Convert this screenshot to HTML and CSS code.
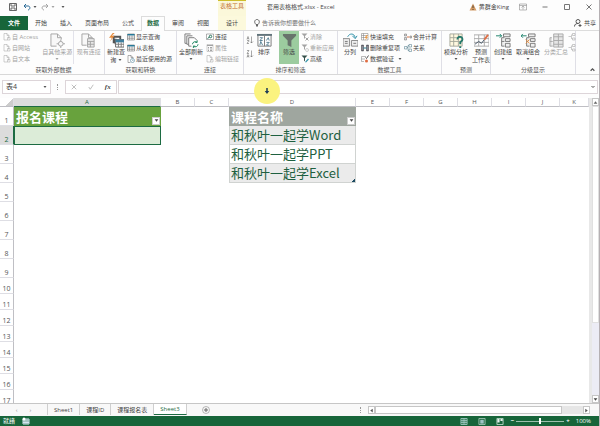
FILE: index.html
```html
<!DOCTYPE html>
<html>
<head>
<meta charset="utf-8">
<title>套用表格格式.xlsx - Excel</title>
<link rel="stylesheet" href="styles.css">
</head>
<body>
<svg class="defs" aria-hidden="true">
  <symbol id="doc" viewBox="0 0 16 16"><path d="M9 14H2V1h6l4 4v3M8 1v4h4" fill="none" stroke="currentColor"/><path d="M9 9h5v5H9zM11 7v4" fill="none" stroke="currentColor"/></symbol>
  <symbol id="docgear" viewBox="0 0 16 16"><path d="M7 14H1V1h7l4 4v2M8 1v4h4" fill="#f8f8f8" stroke="currentColor"/><circle cx="11.500" cy="11.500" r="2.500" fill="#f8f8f8" stroke="currentColor"/><path d="M11.500 7v2M11.500 14v2M7 11.500h2M14 11.500h2" stroke="currentColor"/></symbol>
  <symbol id="doctable" viewBox="0 0 16 16"><path d="M6 13H1V1h7l4 4v2M8 1v4h4" fill="#f8f8f8" stroke="currentColor"/><path d="M7 6h7v9H7zM7 9h7M7 12h7M10 9v6" fill="#e8e8e8" stroke="currentColor"/></symbol>
  <symbol id="newquery" viewBox="0 0 16 16"><path d="M5 11V4h7v3M7 12V6" fill="none" stroke="#555" stroke-width="2"/><path d="M4 0 0 5h3L1 9l5-6H3l3-3z" fill="#e58a3c"/><path d="M7 7h9v8H7z" fill="#fff" stroke="#666"/><path d="M7 7h9v3H7z" fill="#3e7f9f"/><path d="M7 12h9M10 10v5M13 10v5" stroke="#777"/></symbol>
  <symbol id="table" viewBox="0 0 16 16"><path d="M1 2h14v12H1z" fill="#fff" stroke="#555"/><path d="M1 2h14v3H1z" fill="#267999"/><path d="M1 8h14M1 11h14M5 5v9M10 5v9" stroke="#777"/></symbol>
  <symbol id="recent" viewBox="0 0 16 16"><path d="M7 15H2V1h6l4 4v2M8 1v4h4" fill="none" stroke="#666"/><circle cx="11" cy="11" r="4" fill="#fff" stroke="#35718d"/><path d="M11 9v2h2" fill="none" stroke="#35718d"/></symbol>
  <symbol id="refresh" viewBox="0 0 16 16"><path d="M3 11H1V1h6M5 12H3V3h6M8 14H5V5h6l3 3" fill="none" stroke="#777"/><circle cx="12" cy="12" r="4" fill="#fff"/><path d="M9 12a3 3 0 0 1 5-2M15 12a3 3 0 0 1-5 2M14 8v2h-2M10 16v-2h2" fill="none" stroke="#16815c"/></symbol>
  <symbol id="link" viewBox="0 0 16 16"><path d="M1 2h14v11H1z" fill="#fff" stroke="#666"/><circle cx="9" cy="7" r="2.500" fill="none" stroke="#26735a" stroke-width="2"/><path d="m3 11 4-3" stroke="#26735a" stroke-width="2"/></symbol>
  <symbol id="props" viewBox="0 0 16 16"><path d="M2 1h12v14H2z" fill="none" stroke="currentColor"/><path d="M2 3h12M4 7h2M8 7h4M4 10h2M8 10h4M4 13h2M8 13h4" stroke="currentColor" stroke-width="2"/></symbol>
  <symbol id="az" viewBox="0 0 16 16"><path d="m2 7 2-6 2 6M3 5h2M2 9h4l-4 6h4M11 1v13M8 11l3 3 3-3" fill="none" stroke="#555"/></symbol>
  <symbol id="za" viewBox="0 0 16 16"><path d="M2 1h4L2 7h4M2 15l2-6 2 6M3 13h2M11 1v13M8 11l3 3 3-3" fill="none" stroke="#555"/></symbol>
  <symbol id="sort" viewBox="0 0 16 16"><path d="M1 2h14v12H1z" fill="#fff" stroke="#777"/><path d="M0 1h16v2H0z" fill="#62747c"/><path d="M8 3v11" stroke="#777"/><path d="M3 5h3L3 8h3M3 13l1-4 2 4M10 8l2-3 1 3M10 10h3l-3 3h3" fill="none" stroke="#557f92"/></symbol>
  <symbol id="funnel" viewBox="0 0 16 16"><path d="M1 1h14v2L10 8v7l-4-2V8L1 3z" fill="#68736c"/></symbol>
  <symbol id="clear" viewBox="0 0 16 16"><path d="M1 1h12L8 6v6l-2-2V6z" fill="currentColor"/><path d="m9 9 6 6M15 9l-6 6" stroke="currentColor" stroke-width="2"/></symbol>
  <symbol id="reapply" viewBox="0 0 16 16"><path d="M1 1h12L8 6v6l-2-2V6z" fill="currentColor"/><circle cx="12" cy="12" r="3" fill="none" stroke="currentColor"/></symbol>
  <symbol id="advanced" viewBox="0 0 16 16"><path d="M1 1h12L8 6v7l-2-2V6z" fill="#35504a"/><path d="m8 14 6-7 2 2-6 6z" fill="#3293a8"/></symbol>
  <symbol id="split" viewBox="0 0 16 16"><path d="M0 6h7v8H0zM9 8h7v6H9z" fill="#eee" stroke="#888"/><path d="M2 9h3M2 11h3M11 11h3" stroke="#777"/><path d="M5 4c2-4 7-4 8 1M10 3l3 3 2-3" fill="none" stroke="#248ba3"/></symbol>
  <symbol id="flash" viewBox="0 0 16 16"><path d="M1 1h13v13H1zM1 5h13M5 1v13M1 9h7" fill="#fff" stroke="#777"/><path d="m11 4-4 6h3l-2 5 6-7h-3l3-4z" fill="#e89d4c"/></symbol>
  <symbol id="dup" viewBox="0 0 16 16"><path d="M1 2h4v12H1zM11 2h4v12h-4z" fill="#667" stroke="#444"/><path d="M2 6h2M2 10h2M12 6h2M12 10h2" stroke="#fff"/><path d="M5 8h6" stroke="#287d91" stroke-width="2"/></symbol>
  <symbol id="valid" viewBox="0 0 16 16"><path d="M1 3h9M1 8h7M1 13h5M1 3v10" stroke="#777" fill="none"/><circle cx="11" cy="12" r="3" fill="#e06c42"/><path d="m9 5 2 2 4-6" fill="none" stroke="#555" stroke-width="2"/></symbol>
  <symbol id="merge" viewBox="0 0 16 16"><path d="M1 2h4v4H1zM1 9h4v5H1zM12 6h3v4h-3z" fill="#ddd" stroke="#666"/><path d="M6 8h5" stroke="#d7774b" stroke-width="2"/></symbol>
  <symbol id="relation" viewBox="0 0 16 16"><path d="M1 5h5v5H1zM10 1h5v5h-5zM10 10h5v5h-5zM6 7h2V3h2M8 7v6h2" fill="none" stroke="#427183"/></symbol>
  <symbol id="whatif" viewBox="0 0 16 16"><path d="M1 1h13v13H1zM1 5h13M1 9h13M5 1v13M10 1v13" fill="#fff8df" stroke="#a5a79b"/><path d="M9 7c0-5 7-3 5 1l-2 2v2M12 14v2" fill="none" stroke="#26796b" stroke-width="2"/></symbol>
  <symbol id="forecast" viewBox="0 0 16 16"><path d="M0 2h16v12H0zM0 6h16M0 10h16M5 2v12M11 2v12" fill="#fff" stroke="#aaa"/><path d="m1 12 4-3 3 2 3-4" fill="none" stroke="#456"/><path d="m11 7 4-5" stroke="#df7047" stroke-width="2"/></symbol>
  <symbol id="group" viewBox="0 0 16 16"><path d="M8 1h7v3H8zM10 6h5v3h-5zM10 11h5v4h-5zM9 5H6v9h3M6 9h3" fill="#eee" stroke="#777"/><path d="M0 3h6M4 1l2 2-2 2" fill="none" stroke="#198069"/></symbol>
  <symbol id="ungroup" viewBox="0 0 16 16"><path d="M8 1h7v3H8zM10 6h5v3h-5zM10 11h5v4h-5zM9 5H6v9h3" fill="#eee" stroke="#777"/><path d="M0 3h6M2 1 0 3l2 2" fill="none" stroke="#198069"/><path d="m5 7 4 4M9 7l-4 4" stroke="#e68a3a"/></symbol>
  <symbol id="subtotal" viewBox="0 0 16 16"><path d="M5 1h10v14H5zM5 4h10M5 8h10M5 12h10M10 1v14M3 5H1v9h3M1 9h3" fill="#e5e5e5" stroke="#aaa"/></symbol>
  <symbol id="detail" viewBox="0 0 16 16"><path d="M9 1h5v4H9zM9 10h5v4H9zM7 3v9M1 7h5" fill="none" stroke="#999"/></symbol>
  <symbol id="down" viewBox="0 0 8 8"><path d="M1 2h6L4 6z" fill="currentColor"/></symbol>
  <symbol id="chev" viewBox="0 0 8 8"><path d="m1 2 3 3 3-3" fill="none" stroke="currentColor" stroke-width="2"/></symbol>
</svg>

<header class="titlebar">
  <div class="qat">
    <button aria-label="保存"><svg viewBox="0 0 16 16"><path d="M1 1h14v14H1zM4 1v5h8V1M4 15v-5h8v5" fill="none" stroke="#666" stroke-width="2"/></svg></button>
    <button aria-label="撤消"><svg viewBox="0 0 16 16"><path d="M3 6h7c5 0 5 7 0 8M6 2 2 6l4 4" fill="none" stroke="#2b6a96" stroke-width="2"/></svg></button>
    <svg class="caret"><use href="#down"/></svg>
    <button aria-label="恢复" class="off"><svg viewBox="0 0 16 16"><path d="M13 6H6c-5 0-5 7 0 8M10 2l4 4-4 4" fill="none" stroke="currentColor" stroke-width="2"/></svg></button>
    <svg class="caret off"><use href="#down"/></svg>
    <svg class="caret last"><use href="#down"/></svg>
  </div>
  <div class="context">表格工具</div>
  <h1>套用表格格式.xlsx - Excel</h1>
  <div class="account"><svg viewBox="0 0 16 16"><path d="M8 1 15 15H1z" fill="#d29a64"/><path d="M8 5v5M8 12v2" stroke="#543" stroke-width="2"/></svg>黄群金King</div>
  <div class="window">
    <button aria-label="功能区显示选项"><svg viewBox="0 0 16 16"><path d="M1 2h14v12H1zM1 5h14M8 13V7M5 9l3-3 3 3" fill="none" stroke="#777"/></svg></button>
    <button aria-label="最小化"><svg viewBox="0 0 16 16"><path d="M3 8h10" stroke="#777" stroke-width="2"/></svg></button>
    <button aria-label="最大化"><svg viewBox="0 0 16 16"><path d="M3 3h10v10H3z" fill="none" stroke="#777" stroke-width="2"/></svg></button>
    <button aria-label="关闭"><svg viewBox="0 0 16 16"><path d="m3 3 10 10M13 3 3 13" stroke="#777" stroke-width="2"/></svg></button>
  </div>
</header>

<nav class="tabs">
  <button class="file">文件</button>
  <button>开始</button><button>插入</button><button>页面布局</button><button>公式</button><button class="active">数据</button><button>审阅</button><button>视图</button>
  <button class="design">设计</button>
  <button class="tell"><svg viewBox="0 0 16 16"><path d="M6 11C1 6 4 1 8 1s7 5 2 10zM6 13h4M7 15h2" fill="none" stroke="#666" stroke-width="2"/></svg>告诉我你想要做什么</button>
  <button class="share"><svg viewBox="0 0 16 16"><circle cx="8" cy="5" r="4" fill="none" stroke="#555" stroke-width="2"/><path d="M1 15c0-5 4-6 7-6M9 13h6M12 10v6" fill="none" stroke="#555" stroke-width="2"/></svg>共享</button>
</nav>

<section class="ribbon">
  <div class="group g-external">
    <div class="tools">
      <div class="stack off">
        <button><svg><use href="#doc"/></svg>自 Access</button>
        <button><svg><use href="#doc"/></svg>自网站</button>
        <button><svg><use href="#doc"/></svg>自文本</button>
      </div>
      <button class="big off w5"><svg><use href="#docgear"/></svg>自其他来源<svg class="caret"><use href="#down"/></svg></button>
      <button class="big off w4 ruled"><svg><use href="#doctable"/></svg>现有连接</button>
    </div>
    <h2>获取外部数据</h2>
  </div>
  <div class="group g-transform">
    <div class="tools">
      <button class="big w3"><svg><use href="#newquery"/></svg>新建查<span>询 <svg class="caret"><use href="#down"/></svg></span></button>
      <div class="stack">
        <button><svg><use href="#table"/></svg>显示查询</button>
        <button><svg><use href="#table"/></svg>从表格</button>
        <button><svg><use href="#recent"/></svg>最近使用的源</button>
      </div>
    </div>
    <h2>获取和转换</h2>
  </div>
  <div class="group g-connect">
    <div class="tools">
      <button class="big w4"><svg><use href="#refresh"/></svg>全部刷新<svg class="caret"><use href="#down"/></svg></button>
      <div class="stack">
        <button><svg><use href="#link"/></svg>连接</button>
        <button class="off"><svg><use href="#props"/></svg>属性</button>
        <button class="off"><svg><use href="#doc"/></svg>编辑链接</button>
      </div>
    </div>
    <h2>连接</h2>
  </div>
  <div class="group g-sort">
    <div class="tools">
      <div class="pair"><button aria-label="升序"><svg><use href="#az"/></svg></button><button aria-label="降序"><svg><use href="#za"/></svg></button></div>
      <button class="big w2"><svg><use href="#sort"/></svg>排序</button>
      <button class="big w2 on"><svg><use href="#funnel"/></svg>筛选</button>
      <div class="stack">
        <button class="off"><svg><use href="#clear"/></svg>清除</button>
        <button class="off"><svg><use href="#reapply"/></svg>重新应用</button>
        <button><svg><use href="#advanced"/></svg>高级</button>
      </div>
    </div>
    <h2>排序和筛选</h2>
  </div>
  <div class="group g-data">
    <div class="tools">
      <button class="big w2"><svg><use href="#split"/></svg>分列</button>
      <div class="stack">
        <button><svg><use href="#flash"/></svg>快速填充</button>
        <button><svg><use href="#dup"/></svg>删除重复项</button>
        <button><svg><use href="#valid"/></svg>数据验证 <svg class="caret"><use href="#down"/></svg></button>
      </div>
      <div class="stack">
        <button><svg><use href="#merge"/></svg>合并计算</button>
        <button><svg><use href="#relation"/></svg>关系</button>
      </div>
    </div>
    <h2>数据工具</h2>
  </div>
  <div class="group g-forecast">
    <div class="tools">
      <button class="big w4"><svg><use href="#whatif"/></svg>模拟分析<svg class="caret"><use href="#down"/></svg></button>
      <button class="big w3"><svg><use href="#forecast"/></svg>预测<span>工作表</span></button>
    </div>
    <h2>预测</h2>
  </div>
  <div class="group g-outline">
    <div class="tools">
      <button class="big w3"><svg><use href="#group"/></svg>创建组<svg class="caret"><use href="#down"/></svg></button>
      <button class="big w4"><svg><use href="#ungroup"/></svg>取消组合<svg class="caret"><use href="#down"/></svg></button>
      <button class="big w4 off"><svg><use href="#subtotal"/></svg>分类汇总</button>
      <div class="stack off">
        <button aria-label="显示明细数据"><svg><use href="#detail"/></svg></button>
        <button aria-label="隐藏明细数据"><svg><use href="#detail"/></svg></button>
      </div>
    </div>
    <h2>分级显示</h2>
  </div>
  <button class="collapse" aria-label="折叠功能区"><svg viewBox="0 0 8 8"><path d="m1 6 3-3 3 3" fill="none" stroke="#555" stroke-width="2"/></svg></button>
</section>

<div class="formula">
  <div class="namebox"><input aria-label="名称框" value="表4"><svg class="caret"><use href="#down"/></svg></div>
  <span class="dots"></span>
  <div class="fx">
    <button aria-label="取消"><svg viewBox="0 0 8 8"><path d="m1 1 6 6M7 1 1 7" stroke="#aaa"/></svg></button>
    <button aria-label="输入"><svg viewBox="0 0 8 8"><path d="m1 4 2 3 4-6" fill="none" stroke="#aaa"/></svg></button>
    <button aria-label="插入函数"><i>fx</i></button>
  </div>
  <div class="entry"><input aria-label="编辑栏"><svg class="caret"><use href="#chev"/></svg></div>
  <div class="pointer"><svg viewBox="0 0 8 8"><path d="M3 0h2v4h2L4 8 1 4h2z" fill="#1d3b57"/></svg></div>
</div>

<main class="sheet">
  <div class="cells">
    <table>
      <colgroup><col class="c-num"><col class="c-a"><col class="c-s"><col class="c-s"><col class="c-d"><col class="c-s"><col class="c-s"><col class="c-s"><col class="c-s"><col class="c-s"><col class="c-s"><col></colgroup>
      <thead><tr><th class="corner"></th><th class="sel">A</th><th>B</th><th>C</th><th>D</th><th>E</th><th>F</th><th>G</th><th>H</th><th>I</th><th>J</th><th>K</th></tr></thead>
      <tbody>
        <tr><th>1</th><td class="h green"><div>报名课程<button aria-label="筛选报名课程"><svg><use href="#down"/></svg></button></div></td><td></td><td></td><td class="h grey"><div>课程名称<button aria-label="筛选课程名称"><svg><use href="#down"/></svg></button></div></td><td colspan="7"></td></tr>
        <tr><th class="sel">2</th><td class="current"></td><td></td><td></td><td class="band">和秋叶一起学Word</td><td colspan="7"></td></tr>
        <tr><th>3</th><td></td><td></td><td></td><td class="plain">和秋叶一起学PPT</td><td colspan="7"></td></tr>
        <tr><th>4</th><td></td><td></td><td></td><td class="band end">和秋叶一起学Excel</td><td colspan="7"></td></tr>
        <tr><th>5</th><td colspan="11"></td></tr>
        <tr><th>6</th><td colspan="11"></td></tr>
        <tr><th>7</th><td colspan="11"></td></tr>
        <tr><th>8</th><td colspan="11"></td></tr>
        <tr><th>9</th><td colspan="11"></td></tr>
      </tbody>
      <tbody class="short">
        <tr><th>10</th><td colspan="11"></td></tr>
        <tr><th>11</th><td colspan="11"></td></tr>
        <tr><th>12</th><td colspan="11"></td></tr>
        <tr><th>13</th><td colspan="11"></td></tr>
        <tr><th>14</th><td colspan="11"></td></tr>
        <tr><th>15</th><td colspan="11"></td></tr>
        <tr><th>16</th><td colspan="11"></td></tr>
        <tr><th>17</th><td colspan="11"></td></tr>
      </tbody>
    </table>
  </div>
  <div class="vscroll">
    <button aria-label="向上滚动"><svg viewBox="0 0 8 8"><path d="M1 6h6L4 2z" fill="#666"/></svg></button>
    <span class="thumb"></span>
    <span class="track"></span>
    <button aria-label="向下滚动"><svg><use href="#down"/></svg></button>
  </div>
</main>

<div class="sheets">
  <div class="move"><button aria-label="上一张">‹</button><button aria-label="下一张">›</button></div>
  <button class="tab">Sheet1</button><button class="tab">课程ID</button><button class="tab">课程报名表</button><button class="tab active">Sheet3</button>
  <button class="add" aria-label="新工作表"><svg viewBox="0 0 16 16"><circle cx="8" cy="8" r="7" fill="none" stroke="#777"/><path d="M8 4v8M4 8h8" stroke="#666" stroke-width="2"/></svg></button>
  <span class="dots"></span>
  <div class="hscroll">
    <button aria-label="向左滚动"><svg viewBox="0 0 8 8"><path d="M6 1v6L2 4z" fill="#555"/></svg></button>
    <span class="thumb"></span><span class="track"></span>
    <button aria-label="向右滚动"><svg viewBox="0 0 8 8"><path d="M2 1v6l4-3z" fill="#555"/></svg></button>
  </div>
</div>

<footer class="status">
  <span>就绪</span>
  <svg viewBox="0 0 16 16"><path d="M2 4h12v10H2zM2 8h12M2 11h12M6 4v10M10 4v10" fill="none" stroke="#d5e6f2" stroke-width="2"/><circle cx="4" cy="4" r="3" fill="#fff"/></svg>
  <div class="views">
    <button aria-label="普通"><svg viewBox="0 0 16 16"><path d="M1 1h14v14H1zM1 6h14M1 10h14M6 1v14M10 1v14" fill="none" stroke="#a4cbc6" stroke-width="2"/></svg></button>
    <button aria-label="页面布局"><svg viewBox="0 0 16 16"><path d="M1 1h14v14H1z" fill="none" stroke="#a9c9bb" stroke-width="2"/><path d="M4 4h8v9H4z" fill="#9fc3c4"/></svg></button>
    <button aria-label="分页预览"><svg viewBox="0 0 16 16"><path d="M1 1h14v14H1z" fill="none" stroke="#c3dbcf" stroke-width="2"/><path d="M2 2h5v8H2zM9 2h5v5H9z" fill="#e8f2ee"/></svg></button>
  </div>
  <div class="zoom"><button aria-label="缩小">−</button><input type="range" aria-label="缩放" min="10" max="190" value="100"><button aria-label="放大">+</button></div>
  <output>100%</output>
</footer>
</body>
</html>
```
FILE: styles.css
```css
* { box-sizing: border-box; }
body {
  margin: 0;
  height: 100vh;
  display: flex;
  flex-direction: column;
  overflow: hidden;
  background: #fdfdfd;
  border-right: 1px solid #b5b0b3;
  color: #444;
  font: 6px/8px "Open Sans", "Noto Sans CJK SC", sans-serif;
}
button, input { font: inherit; color: inherit; border: 0; padding: 0; margin: 0; background: none; min-width: 0; }
button { display: flex; align-items: center; justify-content: center; white-space: nowrap; }
h1, h2 { margin: 0; font: inherit; white-space: nowrap; }
svg { width: 8px; height: 8px; flex: none; }
.defs { position: absolute; width: 0; height: 0; }
.caret { width: 4px; height: 4px; color: #555; }
.off, .off .caret { color: #a3a3a3; }

.titlebar { display: flex; height: 16px; align-items: center; flex: none; padding-bottom: 2px; }
.qat { display: flex; align-items: center; width: 218px; padding-left: 9px; flex: none; }
.qat button:nth-child(2) { margin-left: 6px; }
.qat .caret { margin-left: 2px; }
.qat button.off { margin-left: 4px; }
.qat .last { margin-left: 6px; }
.context { width: 28px; height: 16px; flex: none; align-self: flex-start; border-top: 1px solid #cdbd2d; background: #fbf8da; color: #c06a2c; line-height: 11px; text-align: center; }
.titlebar h1 { margin-left: 21px; flex: 1; }
.account { display: flex; align-items: center; gap: 2px; margin-right: 10px; }
.window { display: flex; gap: 14px; margin-right: 6px; }

.tabs { display: flex; gap: 1px; height: 14px; flex: none; position: relative; z-index: 1; }
.tabs button { padding: 0 6px 1px; }
.tabs .file { width: 28px; background: #17653a; color: #fff; font-weight: bold; }
.tabs .active { height: 15px; padding: 0 5px 3px; border: 1px solid #dcdcdc; border-bottom: 0; background: #fdfdfd; color: #1c6b42; font-weight: bold; }
.tabs .design { width: 28px; margin-left: 2px; background: #fcf9dc; }
.tabs .tell { gap: 1px; color: #777; }
.tabs .share { margin-left: auto; gap: 2px; padding-right: 3px; }

.ribbon { display: flex; height: 45px; flex: none; border-top: 1px solid #dcdcdc; border-bottom: 1px solid #d8d8d8; position: relative; }
.group { display: flex; flex-direction: column; justify-content: space-between; border-right: 1px solid #dfdfe6; flex: none; }
.tools { display: flex; height: 34px; }
.group h2 { text-align: center; color: #555; line-height: 8px; }
.stack { display: flex; flex-direction: column; align-items: flex-start; }
.stack button { height: 11px; gap: 1px; padding-top: 1px; }
.stack .caret { margin-left: 3px; }
.big { flex-direction: column; justify-content: flex-start; padding-top: 2px; flex: none; height: 33px; }
.big > svg:first-child { width: 15px; height: 15px; }
.big > .caret { margin-top: 1px; }
.w2 { width: 20px; }
.w3 { width: 22px; }
.w4 { width: 28px; }
.w5 { width: 32px; }
.ruled { border-left: 1px solid #e2e2ea; }
.on { background: #9ccc9f; }
.pair { display: flex; flex-direction: column; gap: 6px; padding-top: 5px; }
.g-external { width: 105px; padding-left: 3px; }
.g-external .stack { width: 39px; }
.g-transform { width: 72px; }
.g-connect { width: 67px; }
.g-sort { width: 94px; }
.g-data { width: 104px; }
.g-forecast { width: 49px; }
.g-outline { width: 85px; }
.g-external .big { flex: 1; }
.g-sort .pair { padding-left: 2px; }
.g-sort .on { margin: 0 2px 0 5px; }
.g-data .tools { gap: 1px; padding-left: 2px; }
.g-data .stack:last-child { margin-left: 1px; }
.g-connect .big { margin-right: 1px; }
.g-outline .tools { padding-left: 1px; }
.g-outline .stack { margin-left: -2px; }
.collapse { margin: auto 4px 1px auto; height: 8px; }
.collapse svg { width: 5px; height: 5px; }

.formula { display: flex; align-items: center; height: 23px; flex: none; padding: 0 1px 0 2px; position: relative; }
.namebox, .fx, .entry { display: flex; align-items: center; height: 14px; border: 1px solid #ddd5d9; background: #fff; }
.namebox { width: 49px; padding: 0 3px; font-size: 7px; }
.namebox input { flex: 1; }
.dots { width: 1px; height: 6px; border-left: 1px dotted #999; }
.formula .dots { margin: 0 7px 0 6px; }
.fx { width: 52px; justify-content: space-around; margin-right: 1px; }
.fx svg { width: 6px; height: 6px; }
.fx i { font: italic bold 7px "Liberation Serif", serif; }
.entry { flex: 1; padding: 0 2px; }
.entry input { flex: 1; }
.pointer { position: absolute; left: 254px; top: 3px; width: 26px; height: 26px; border-radius: 50%; background: #fbf37f; display: grid; place-items: center; z-index: 2; }
.pointer svg { width: 6px; height: 6px; }

.sheet { display: flex; flex: 1; min-height: 0; overflow: hidden; background: #fff; }
.cells { flex: 1; min-width: 0; overflow: hidden; }
table { width: 100%; table-layout: fixed; border-collapse: separate; border-spacing: 0; }
.c-num { width: 14px; }
.c-a { width: 147px; }
.c-s { width: 34px; }
.c-d { width: 127px; }
th, td { padding: 0; font-weight: normal; overflow: hidden; white-space: nowrap; }
thead th { height: 9px; line-height: 8px; color: #555; border-right: 1px solid #dedee4; border-bottom: 1px solid #bfbfc4; }
thead .sel { background: #dcdcdc; border-bottom-color: #1c6b42; color: #1c6b42; }
.corner { background: linear-gradient(135deg, transparent 65%, #ccc 65%); }
tbody tr { height: 19px; }
.short tr { height: 16px; }
tbody th { vertical-align: bottom; font-size: 7px; border-right: 1px solid #bfbfc4; border-bottom: 1px solid #dedee4; color: #555; }
tbody .sel { background: #dcdcdc; border-right-color: #1c6b42; color: #1c6b42; }
.short td { line-height: 14px; }
td { font: 13px/18px "Noto Sans CJK SC", sans-serif; color: #1e6040; }
.h { color: #fff; font-weight: bold; padding-left: 2px; }
.h div { display: flex; justify-content: space-between; align-items: flex-end; }
.h button { width: 8px; height: 8px; margin: 0 1px 1px 0; background: #fff; border: 1px solid #ccc; color: #444; }
.h svg { width: 5px; height: 5px; }
.green { background: #68a23d; }
.grey { background: #9fa69f; }
.current { background: #dcecd8; border: 1px solid #1c6b42; }
.band, .plain { padding-left: 1px; border-bottom: 1px solid #d0d3d1; border-right: 1px solid #d0d3d1; border-left: 1px solid #d0d3d1; }
.band { background: #ebebeb; }
.end { background: linear-gradient(135deg, transparent 50%, #1c4b62 50%) right bottom / 3px 3px no-repeat #ebebeb; }
.vscroll { width: 10px; display: flex; flex-direction: column; border-left: 3px solid #e8e8e8; }
.vscroll button, .hscroll button { width: 7px; height: 8px; border: 1px solid #c6c6c6; background: #fff; flex: none; }
.vscroll button svg, .hscroll button svg { width: 5px; height: 5px; }
.vscroll .thumb { flex: 3; border: 1px solid #e0e0e0; }
.vscroll .track { flex: 1; background: #ececf5; }

.sheets { display: flex; align-items: center; height: 13px; flex: none; border-top: 1px solid #c6c6c6; background: #f8f8f8; }
.move { display: flex; justify-content: space-evenly; width: 47px; padding: 0 4px; color: #888; }
.tab { height: 11px; padding: 0 6px; align-self: flex-start; border-right: 1px solid #cfcfcf; }
.move + .tab { border-left: 1px solid #cfcfcf; }
.tab.active { background: #fff; border-bottom: 1px solid #1c6b42; color: #1c6b42; }
.add { margin: 0 auto 0 15px; }
.sheets .dots { margin-right: 7px; }
.hscroll { display: flex; width: 37%; margin-right: 9px; }
.hscroll .thumb { flex: 9; height: 8px; border: 1px solid #c6c6c6; background: #fff; }
.hscroll .track { flex: 1; height: 8px; background: #e6e6e6; }

.status { display: flex; align-items: center; height: 10px; flex: none; padding: 0 8px 0 3px; background: #17653a; color: #fff; }
.status > svg { margin-left: 7px; }
.views { display: flex; gap: 10px; margin-left: auto; }
.views svg { height: 7px; }
.zoom { display: flex; align-items: center; gap: 2px; margin: 0 6px 0 7px; font-weight: bold; }
.zoom input { appearance: none; width: 48px; height: 6px; background: linear-gradient(#9dc0ad, #9dc0ad) center / 100% 1px no-repeat; }
.zoom input::-webkit-slider-thumb { appearance: none; width: 2px; height: 6px; background: #fff; }
```
